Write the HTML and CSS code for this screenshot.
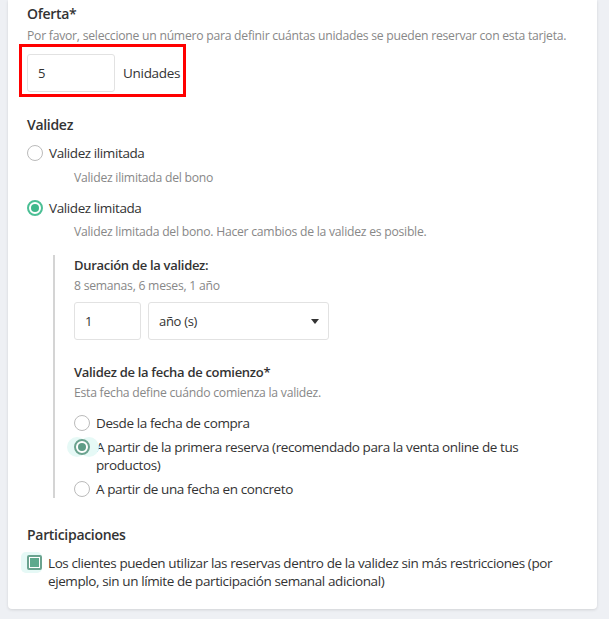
FILE: index.html
```html
<!DOCTYPE html>
<html>

<head>
	<title>Tarjeta - Oferta y validez</title>
	<meta charset="UTF-8">
	<link rel="stylesheet" href="styles.css">
	<meta name="viewport" content="width=device-width, initial-scale=1">
</head>

<body>
	<div class="card">
		<div class="section">
			<p class="title">Oferta*</p>
			<p class="hint">Por favor, seleccione un número para definir cuántas unidades se pueden reservar con esta tarjeta.</p>
			<div class="marked">
				<div class="box box-offer">5</div>
				<span class="unit">Unidades</span>
			</div>
		</div>

		<div class="section section-validity">
			<p class="title">Validez</p>
			<div class="option">
				<span class="radio"></span>
				<span class="label">Validez ilimitada</span>
			</div>
			<p class="hint option-hint">Validez ilimitada del bono</p>
			<div class="option option-second">
				<span class="radio checked"></span>
				<span class="label">Validez limitada</span>
			</div>
			<p class="hint option-hint">Validez limitada del bono. Hacer cambios de la validez es posible.</p>

			<div class="nested">
				<p class="subtitle">Duración de la validez:</p>
				<p class="hint">8 semanas, 6 meses, 1 año</p>
				<div class="duration">
					<div class="box box-amount">1</div>
					<div class="box box-select">
						<span>año (s)</span>
						<span class="caret"></span>
					</div>
				</div>

				<p class="subtitle subtitle-start">Validez de la fecha de comienzo*</p>
				<p class="hint">Esta fecha define cuándo comienza la validez.</p>
				<div class="choices">
					<div class="option">
						<span class="radio"></span>
						<span class="label">Desde la fecha de compra</span>
					</div>
					<div class="option">
						<span class="radio checked focused"></span>
						<span class="label">A partir de la primera reserva (recomendado para la venta online de tus productos)</span>
					</div>
					<div class="option">
						<span class="radio"></span>
						<span class="label">A partir de una fecha en concreto</span>
					</div>
				</div>
			</div>
		</div>

		<div class="section section-part">
			<p class="title">Participaciones</p>
			<div class="option">
				<span class="check"></span>
				<span class="label">Los clientes pueden utilizar las reservas dentro de la validez sin más restricciones (por ejemplo, sin un límite de participación semanal adicional)</span>
			</div>
		</div>
	</div>
</body>

</html>
```

FILE: styles.css
```css
body {
	margin: 0;
	background-color: #eef0f4;
	font-family: "Open Sans", "Noto Sans", sans-serif;
	color: #333;
}

p {
	margin: 0;
}

.card {
	margin: 0 12px 11px 8px;
	padding: 4px 20px 19px 19px;
	background-color: white;
	border-radius: 0 0 4px 4px;
	box-shadow: 0 1px 3px rgba(0, 0, 0, 0.12);
}

.title {
	font-size: 14px;
	font-weight: 600;
	line-height: 20px;
	letter-spacing: -0.3px;
}

.hint {
	margin-top: 2px;
	font-size: 12.2px;
	line-height: 20px;
	color: #888;
	letter-spacing: -0.25px;
}

.marked {
	display: inline-flex;
	align-items: center;
	margin: -2px 0 0 -8px;
	padding: 7px 3px 2px 5px;
	border: 3px solid #f00;
}

.box {
	box-sizing: border-box;
	display: flex;
	align-items: center;
	height: 38px;
	padding: 0 10px;
	border: 1px solid #e2e2e2;
	border-radius: 3px;
	font-size: 13px;
	letter-spacing: -0.3px;
}

.box-offer {
	width: 88px;
}

.unit {
	margin-left: 8px;
	font-size: 13.5px;
	letter-spacing: -0.3px;
}

.section-validity {
	margin-top: 18px;
}

.option {
	display: flex;
	align-items: flex-start;
	margin-top: 9px;
}

.option-second {
	margin-top: 11px;
}

.label {
	margin-left: 6px;
	font-size: 13.5px;
	line-height: 18px;
	letter-spacing: -0.4px;
}

.radio {
	box-sizing: border-box;
	flex: none;
	position: relative;
	width: 16px;
	height: 16px;
	margin-top: 1px;
	border: 1.5px solid #bbb;
	border-radius: 50%;
}

.radio.checked {
	border: 2px solid #4cbf95;
}

.radio.checked::after {
	content: "";
	position: absolute;
	left: 2px;
	top: 2px;
	width: 8px;
	height: 8px;
	border-radius: 50%;
	background-color: #3fb88b;
}

.radio.focused {
	border-color: #6aa38f;
	box-shadow: -5px 0 0 2px #e6f9f6, 7px 0 0 2px #e6f9f6;
}

.radio.focused::after {
	background-color: #5e9c86;
}

.option-hint {
	margin: 6px 0 0 47px;
}

.option-second + .option-hint {
	margin-top: 5px;
}

.nested {
	margin: 13px 0 0 26px;
	padding: 0 0 0 19px;
	border-left: 2px solid #d4d4d4;
}

.subtitle {
	font-size: 13px;
	font-weight: 600;
	line-height: 20px;
	letter-spacing: -0.3px;
}

.nested .hint {
	margin-top: 1px;
}

.duration {
	display: flex;
	gap: 7px;
	margin-top: 6px;
}

.box-amount {
	width: 67px;
}

.box-select {
	width: 181px;
	justify-content: space-between;
	padding: 0 9px 0 10px;
}

.caret {
	width: 0;
	height: 0;
	border-left: 4px solid transparent;
	border-right: 4px solid transparent;
	border-top: 5px solid #333;
}

.subtitle-start {
	margin-top: 22px;
}

.choices {
	margin-top: 11px;
}

.choices .option {
	margin-top: 6px;
}

.choices .option:first-child {
	margin-top: 0;
}

.section-part {
	margin-top: 27px;
}

.check {
	box-sizing: border-box;
	flex: none;
	width: 15px;
	height: 15px;
	margin-top: 1px;
	border: 2px solid #6aa38f;
	border-radius: 2px;
	background-color: #5ea98d;
	box-shadow: inset 0 0 0 1px white, -3px 0 0 3px #e6f9f6;
}
```
